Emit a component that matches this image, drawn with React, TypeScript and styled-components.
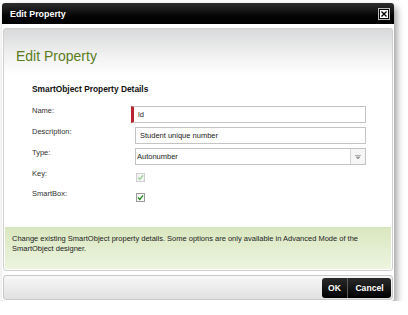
import styled, { createGlobalStyle } from 'styled-components';

const GlobalStyle = createGlobalStyle`
    html, body {
        margin: 0;
        padding: 0;
        background: #ffffff;
    }
    body {
        font-family: "Liberation Sans", Arial, sans-serif;
        color: #222;
    }
`;

const App = () => {
    return (
        <>
            <GlobalStyle />
            <Page>
                <Dialog>
                    <TitleBar>
                        <TitleText>Edit Property</TitleText>
                        <CloseButton aria-label="Close">
                            <svg width="6" height="6" viewBox="0 0 6 6">
                                <path d="M0.5 0.5 L5.5 5.5 M5.5 0.5 L0.5 5.5" stroke="#000" strokeWidth="1.4" />
                            </svg>
                        </CloseButton>
                    </TitleBar>

                    <Panel>
                        <Heading>Edit Property</Heading>
                        <Section>
                            <SectionTitle>SmartObject Property Details</SectionTitle>
                            <Form>
                                <Label>Name:</Label>
                                <Field $required>
                                    <FieldText>id</FieldText>
                                </Field>

                                <Label>Description:</Label>
                                <Field>
                                    <FieldText>Student unique number</FieldText>
                                </Field>

                                <Label>Type:</Label>
                                <Field>
                                    <SelectText>Autonumber</SelectText>
                                    <DropButton>
                                        <svg width="6" height="4" viewBox="0 0 6 4">
                                            <path d="M0 0.5 H6 M1 2 L5 2 L3 4 Z" stroke="#9a9a9a" strokeWidth="0.8" fill="#9a9a9a" />
                                        </svg>
                                    </DropButton>
                                </Field>

                                <Label>Key:</Label>
                                <CheckCell>
                                    <CheckBox $disabled>
                                        <svg width="7" height="7" viewBox="0 0 7 7">
                                            <path d="M1 3.6 L2.8 5.4 L6 1.4" stroke="#8fcf8a" strokeWidth="1.3" fill="none" />
                                        </svg>
                                    </CheckBox>
                                </CheckCell>

                                <Label>SmartBox:</Label>
                                <CheckCell>
                                    <CheckBox>
                                        <svg width="7" height="7" viewBox="0 0 7 7">
                                            <path d="M1 3.6 L2.8 5.4 L6 1.4" stroke="#1f8a1f" strokeWidth="1.4" fill="none" />
                                        </svg>
                                    </CheckBox>
                                </CheckCell>
                            </Form>
                        </Section>
                        <InfoBand>
                            Change existing SmartObject property details. Some options are only available in Advanced Mode of the SmartObject designer.
                        </InfoBand>
                    </Panel>

                    <Footer>
                        <ButtonGroup>
                            <ActionButton $first>OK</ActionButton>
                            <ActionButton>Cancel</ActionButton>
                        </ButtonGroup>
                    </Footer>
                </Dialog>
            </Page>
        </>
    );
};

export default App;

const Page = styled.div`
    padding: 3px 0 0 2px;
`

const Dialog = styled.div`
    width: 392px;
    background: #ffffff;
    border-radius: 3px;
    padding-bottom: 1px;
    box-shadow: 3px 4px 7px rgba(0, 0, 0, 0.38);
    display: flex;
    flex-direction: column;
`

const TitleBar = styled.div`
    height: 21px;
    display: flex;
    align-items: center;
    justify-content: space-between;
    padding: 0 5px 0 8px;
    border-radius: 3px 3px 0 0;
    background: linear-gradient(#2e2e2e, #050505 60%, #000);
`

const TitleText = styled.div`
    color: #ffffff;
    font-weight: bold;
    font-size: 8.9px;
    line-height: 10px;
`

const CloseButton = styled.div`
    width: 10px;
    height: 10px;
    box-sizing: border-box;
    background: #ffffff;
    border: 1px solid #000;
    box-shadow: 0 0 0 1px #bdbdbd;
    display: flex;
    align-items: center;
    justify-content: center;
`

const Panel = styled.div`
    margin: 4px 1px 0 1px;
    border: 1px solid #cfcfcf;
    border-radius: 3px;
    background: linear-gradient(#d8d9da 0, #f2f2f2 28px, #ffffff 46px);
    display: flex;
    flex-direction: column;
`

const Heading = styled.div`
    margin: 19px 0 0 12px;
    font-size: 14px;
    line-height: 16px;
    color: #5a7d1c;
`

const Section = styled.div`
    padding-left: 28px;
    margin-top: 20px;
`

const SectionTitle = styled.div`
    font-weight: bold;
    font-size: 8.4px;
    line-height: 10px;
    color: #111;
`

const Form = styled.div`
    display: grid;
    grid-template-columns: 99px 235px;
    grid-auto-rows: auto;
    row-gap: 4px;
    margin-top: 12px;
`

const Label = styled.div`
    font-size: 7.5px;
    line-height: 9px;
    color: #333;
`

const Field = styled.div<{ $required?: boolean }>`
    height: 17px;
    box-sizing: border-box;
    margin-left: ${p => (p.$required ? '0' : '4px')};
    border: 1px solid #c4c4c4;
    border-left: ${p => (p.$required ? '3px solid #b8242f' : '1px solid #c4c4c4')};
    background: #ffffff;
    display: flex;
    align-items: stretch;
`

const FieldText = styled.div`
    flex: 1;
    padding-left: 4px;
    font-size: 7.5px;
    line-height: 15px;
    color: #222;
`

const SelectText = styled(FieldText)`
    padding-left: 1px;
`

const DropButton = styled.div`
    width: 14px;
    border-left: 1px solid #d4d4d4;
    background: #f6f6f6;
    display: flex;
    align-items: center;
    justify-content: center;
`

const CheckCell = styled.div`
    height: 16px;
    padding: 4px 0 0 5px;
    box-sizing: border-box;
`

const CheckBox = styled.div<{ $disabled?: boolean }>`
    width: 9px;
    height: 9px;
    box-sizing: border-box;
    border: 1px solid ${p => (p.$disabled ? '#cfcfcf' : '#9a9a9a')};
    background: ${p => (p.$disabled ? '#f4f4f4' : '#f8f8f8')};
    display: flex;
    align-items: center;
    justify-content: center;
`

const InfoBand = styled.div`
    margin: 22px 1px 1px 1px;
    height: 42px;
    box-sizing: border-box;
    padding: 7px 0 0 7px;
    font-size: 7.5px;
    line-height: 10px;
    color: #222;
    background: linear-gradient(#d9e7bf, #edf4e0);
`

const Footer = styled.div`
    margin: 4px 1px 0 1px;
    height: 25px;
    box-sizing: border-box;
    border: 1px solid #c9c9c9;
    border-radius: 3px;
    background: linear-gradient(#f7f7f7, #e1e1e1);
    display: flex;
    align-items: center;
    justify-content: flex-end;
    padding-right: 1px;
`

const ButtonGroup = styled.div`
    display: flex;
    height: 20px;
    border-radius: 3px;
    overflow: hidden;
`

const ActionButton = styled.div<{ $first?: boolean }>`
    display: flex;
    align-items: center;
    justify-content: center;
    width: ${p => (p.$first ? '25px' : '43px')};
    border-right: ${p => (p.$first ? '1px solid #5a5a5a' : 'none')};
    background: linear-gradient(#2a2a2a, #000);
    color: #ffffff;
    font-weight: bold;
    font-size: 8.6px;
`
